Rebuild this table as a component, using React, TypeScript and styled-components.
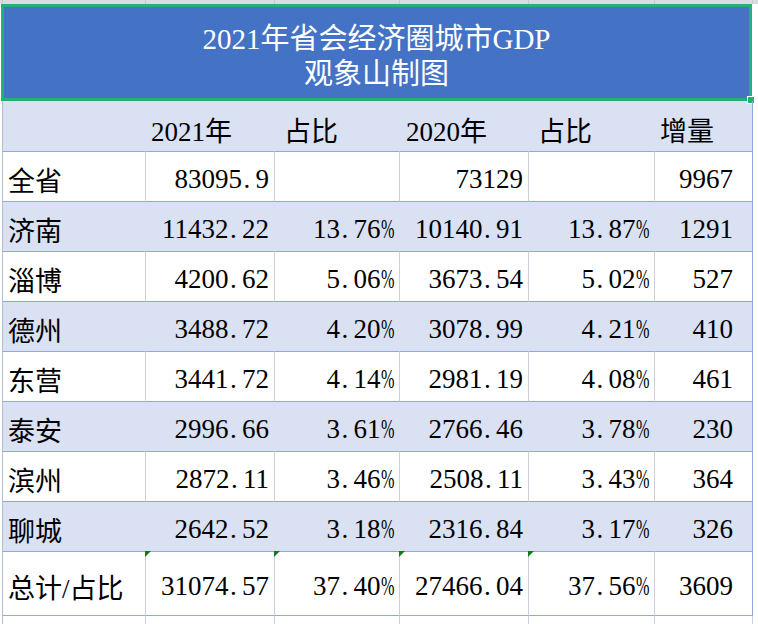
import styled, { createGlobalStyle } from 'styled-components';

const GlobalStyle = createGlobalStyle`
  html, body {
    margin: 0;
    padding: 0;
    background: #ffffff;
  }
`;

const COLS = '143px 129px 125px 129px 126px 98px';

const Sheet = styled.div`
  width: 758px;
  height: 624px;
  overflow: hidden;
  background: #ffffff;
  font-family: 'Liberation Serif', 'Noto Sans CJK SC', serif;
  color: #000000;
`;

const TopStrip = styled.div`
  display: grid;
  grid-template-columns: 3px ${COLS};
  height: 4px;
  background: #dadcdf;

  & > span {
    border-right: 1px solid #c6cad0;
  }
`;

const Title = styled.div`
  position: relative;
  margin-left: 1px;
  width: 751px;
  height: 97px;
  box-sizing: border-box;
  border: 3px solid #21b276;
  background: #4472c4;
  color: #ffffff;
  font-size: 29px;
  line-height: 35px;
  display: flex;
  flex-direction: column;
  align-items: center;
  justify-content: center;
  padding-top: 8px;
`;

const Handle = styled.span`
  position: absolute;
  right: -6px;
  bottom: -6px;
  width: 6px;
  height: 6px;
  background: #21b276;
  border: 1px solid #ffffff;
`;

const Table = styled.div`
  margin-left: 2px;
  border-left: 1px solid #b3bcd6;
  width: 750px;
`;

const Cell = styled.div<{ $right?: boolean; $pl?: number; $pr?: number }>`
  position: relative;
  display: flex;
  align-items: center;
  justify-content: ${(p) => (p.$right ? 'flex-end' : 'flex-start')};
  padding: 6px ${(p) => p.$pr ?? 5}px 0 ${(p) => p.$pl ?? 6}px;
  font-size: 27px;
  white-space: nowrap;
  border-right: 1px solid #cbd0dc;
  border-bottom: 1px solid #8eaadb;
`;

const Row = styled.div<{ $band?: boolean; $h: number }>`
  display: grid;
  grid-template-columns: ${COLS};
  height: ${(p) => p.$h}px;
  background: ${(p) => (p.$band ? '#d9e1f2' : '#ffffff')};

  ${Cell} {
    border-right-color: ${(p) => (p.$band ? 'transparent' : '#cbd0dc')};
  }

  ${Cell}:last-child {
    border-right-color: #8eaadb;
  }
`;

const Filler = styled(Row)`
  ${Cell} {
    border-bottom: none;
  }

  ${Cell}:last-child {
    border-right-color: #cbd0dc;
  }
`;

const Dot = styled.span`
  display: inline-block;
  width: 0.5em;
  padding-left: 0.06em;
  box-sizing: border-box;
`;

const Pct = styled.span`
  display: inline-block;
  width: 0.5em;
  transform: scaleX(0.6);
  transform-origin: left center;
`;

const Flag = styled.span`
  position: absolute;
  top: -1px;
  left: -1px;
  width: 0;
  height: 0;
  border-top: 6px solid #0b7d12;
  border-right: 6px solid transparent;
`;

const Num = ({ v }: { v: string }) => (
  <span>
    {v.split('').map((ch, i) =>
      ch === '.' ? (
        <Dot key={i}>.</Dot>
      ) : ch === '%' ? (
        <Pct key={i}>%</Pct>
      ) : (
        <span key={i}>{ch}</span>
      )
    )}
  </span>
);

const rows = [
  ['全省', '83095.9', '', '73129', '', '9967'],
  ['济南', '11432.22', '13.76%', '10140.91', '13.87%', '1291'],
  ['淄博', '4200.62', '5.06%', '3673.54', '5.02%', '527'],
  ['德州', '3488.72', '4.20%', '3078.99', '4.21%', '410'],
  ['东营', '3441.72', '4.14%', '2981.19', '4.08%', '461'],
  ['泰安', '2996.66', '3.61%', '2766.46', '3.78%', '230'],
  ['滨州', '2872.11', '3.46%', '2508.11', '3.43%', '364'],
  ['聊城', '2642.52', '3.18%', '2316.84', '3.17%', '326'],
];

const total = ['总计/占比', '31074.57', '37.40%', '27466.04', '37.56%', '3609'];

const DataCells = ({ r, flags }: { r: string[]; flags?: boolean }) => (
  <>
    <Cell $pl={5}>{r[0]}</Cell>
    {r.slice(1).map((v, i) => (
      <Cell key={i} $right $pr={i === 4 ? 19 : 5}>
        {flags && i < 4 && <Flag />}
        <Num v={v} />
      </Cell>
    ))}
  </>
);

export default function App() {
  return (
    <>
      <GlobalStyle />
      <Sheet>
        <TopStrip>
          <span />
          <span />
          <span />
          <span />
          <span />
          <span />
          <span />
        </TopStrip>
        <Title>
          <div>2021年省会经济圈城市GDP</div>
          <div>观象山制图</div>
          <Handle />
        </Title>
        <Table>
          <Row $band $h={51}>
            <Cell />
            <Cell $pl={5}>2021年</Cell>
            <Cell $pl={9}>占比</Cell>
            <Cell $pl={6}>2020年</Cell>
            <Cell $pl={9}>占比</Cell>
            <Cell $pl={5}>增量</Cell>
          </Row>
          {rows.map((r, i) => (
            <Row key={r[0]} $band={i % 2 === 1} $h={50}>
              <DataCells r={r} />
            </Row>
          ))}
          <Row $h={64}>
            <DataCells r={total} flags />
          </Row>
          <Filler $h={20}>
            <Cell />
            <Cell />
            <Cell />
            <Cell />
            <Cell />
            <Cell />
          </Filler>
        </Table>
      </Sheet>
    </>
  );
}
